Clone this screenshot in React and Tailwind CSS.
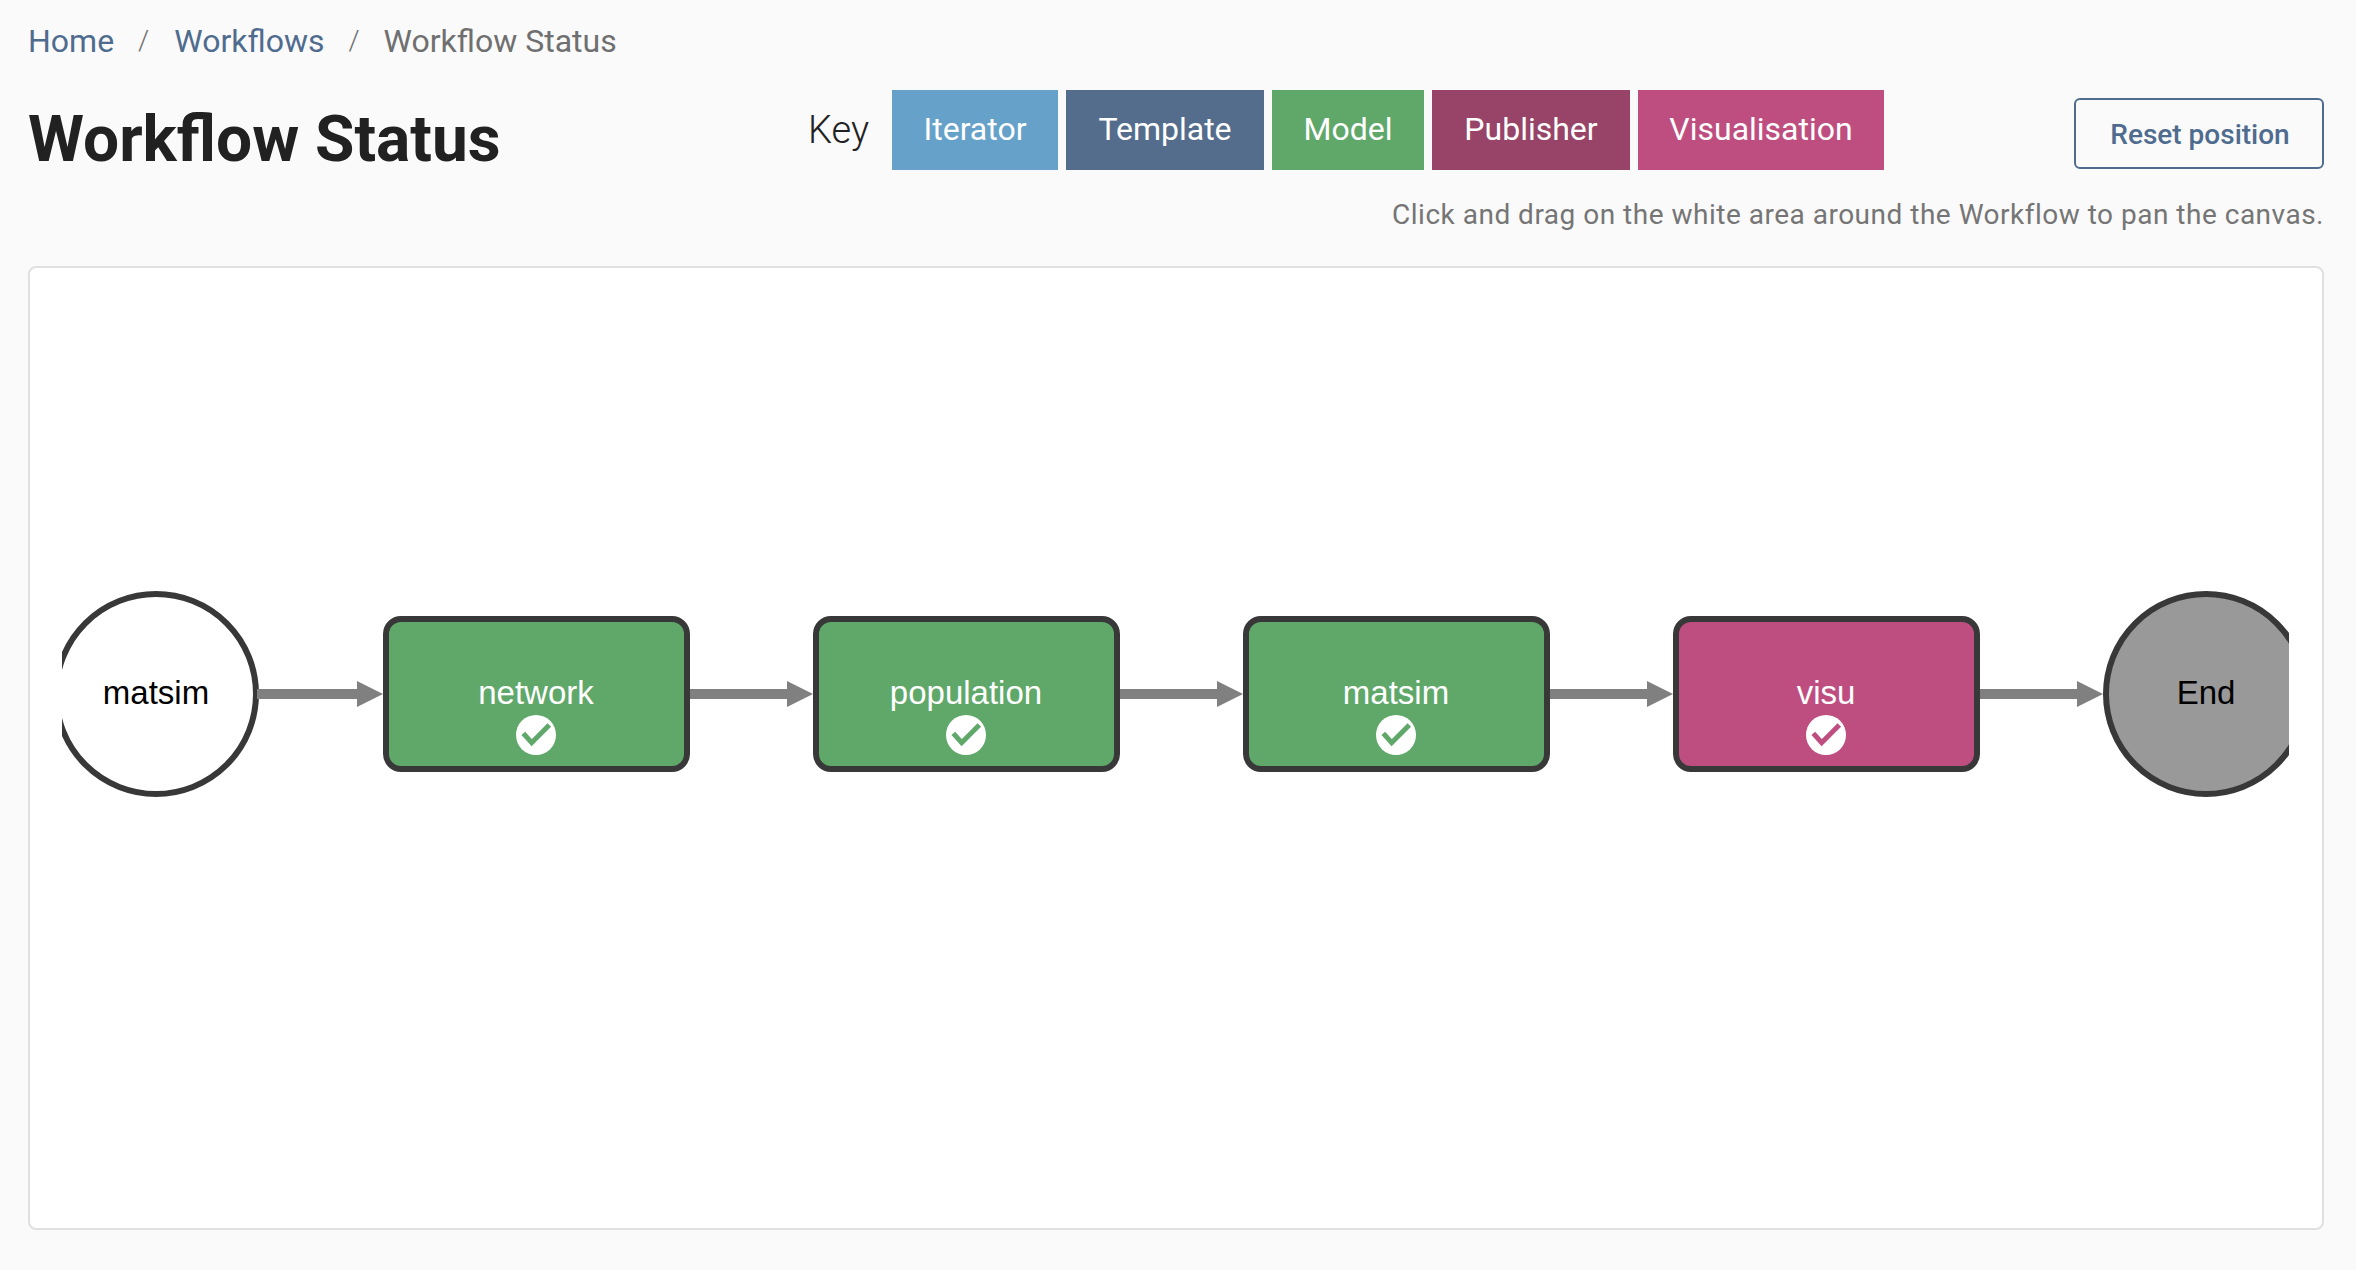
import React from "react";

const keyItems = [
  { label: "Iterator", className: "bg-[#65a1c8] w-[166px]" },
  { label: "Template", className: "bg-[#546d8c] w-[198px]" },
  { label: "Model", className: "bg-[#5fa86a] w-[152px]" },
  { label: "Publisher", className: "bg-[#974468] w-[198px]" },
  { label: "Visualisation", className: "bg-[#bf4e80] w-[246px]" },
];

const tasks = [
  { name: "network", x: 536, fill: "#5fa86a" },
  { name: "population", x: 966, fill: "#5fa86a" },
  { name: "matsim", x: 1396, fill: "#5fa86a" },
  { name: "visu", x: 1826, fill: "#bf4e80" },
];

const arrows = [259, 689, 1119, 1549, 1979];

const WorkflowDiagram = () => (
  <svg
    className="block h-full w-full"
    viewBox="30 268 2292 960"
    fontFamily="'Liberation Sans', Arial, sans-serif"
  >
    <svg x="62" y="268" width="2227" height="960" viewBox="62 268 2227 960">
      <circle cx="156" cy="694" r="100" fill="#fff" stroke="#383838" strokeWidth="6" />
      <text x="156" y="704" fontSize="33" textAnchor="middle" fill="#000">
        matsim
      </text>

      {arrows.map((x) => (
        <g key={x} fill="#808080">
          <rect x={x - 2} y="689" width="100" height="10" />
          <polygon points={`${x + 98},681 ${x + 124},694 ${x + 98},707`} />
        </g>
      ))}

      {tasks.map((task) => (
        <g key={task.name}>
          <rect
            x={task.x - 150}
            y="619"
            width="301"
            height="150"
            rx="15"
            fill={task.fill}
            stroke="#383838"
            strokeWidth="6"
          />
          <text x={task.x} y="704" fontSize="33" textAnchor="middle" fill="#fff">
            {task.name}
          </text>
          <circle cx={task.x} cy="735" r="20" fill="#fff" />
          <path
            d={`M${task.x - 12.7} 733.3l8.4 9.4 17.6-17.7`}
            fill="none"
            stroke={task.fill}
            strokeWidth="5"
          />
        </g>
      ))}

      <circle cx="2206" cy="694" r="100" fill="#999" stroke="#383838" strokeWidth="6" />
      <text x="2206" y="704" fontSize="33" textAnchor="middle" fill="#000">
        End
      </text>
    </svg>
  </svg>
);

const App = () => {
  return (
    <div className="h-[1270px] bg-[#fafafa] pl-[28px] pr-[32px] pt-[21px] font-['Roboto',sans-serif] overflow-hidden">
      <nav className="flex h-[40px] items-center text-[32px] text-[#6f6f6f]">
        <a className="text-[#4f6c8f]">Home</a>
        <span className="ml-[24px] mr-[25px] text-[28px] font-light">/</span>
        <a className="text-[#4f6c8f]">Workflows</a>
        <span className="mx-[24px] text-[28px] font-light">/</span>
        <span>Workflow Status</span>
      </nav>

      <div className="mt-[29px] flex h-[80px] items-center">
        <h1 className="w-[780px] pt-[20px] text-[64px] font-bold leading-none text-[#212121]">Workflow Status</h1>
        <div className="flex items-center gap-[8px]">
          <span className="mr-[16px] w-[60px] text-[38px] font-light text-[#212121]">Key</span>
          {keyItems.map((item) => (
            <div
              key={item.label}
              className={`flex h-[80px] items-center justify-center pb-[2px] text-[32px] text-white ${item.className}`}
            >
              {item.label}
            </div>
          ))}
        </div>
        <button className="ml-auto mt-[7px] h-[71px] w-[250px] rounded-[6px] border-2 border-[#4f6c8f] pl-[2px] pt-[2px] text-[28px] font-medium text-[#4f6c8f]">
          Reset position
        </button>
      </div>

      <p className="mt-[27px] text-right text-[28px] leading-[36px] tracking-[0.5px] text-[#757575]">
        Click and drag on the white area around the Workflow to pan the canvas.
      </p>

      <div className="mt-[33px] h-[964px] rounded-[8px] border-2 border-[#e0e0e0] bg-white overflow-hidden">
        <WorkflowDiagram />
      </div>
    </div>
  );
};

export default App;
